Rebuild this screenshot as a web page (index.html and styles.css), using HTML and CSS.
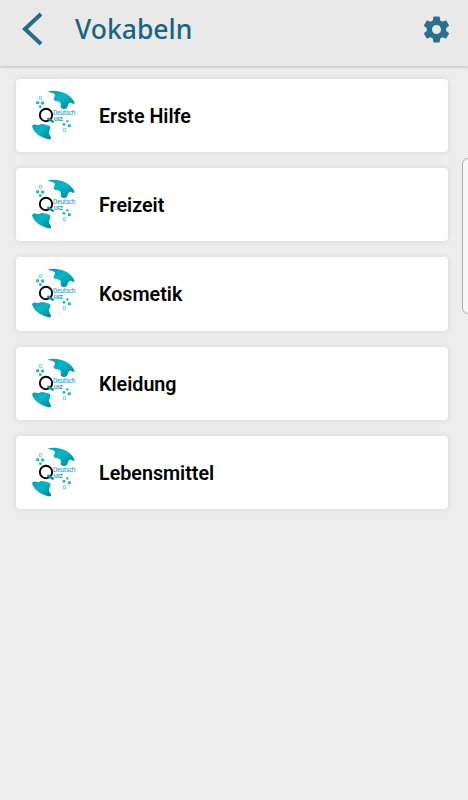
FILE: index.html
```html
<!DOCTYPE html>
<html lang="de">
  <head>
    <meta charset="UTF-8">
    <title>Vokabeln</title>
    <link rel="stylesheet" href="styles.css">
  </head>
  <body>
    <svg class="defs" width="0" height="0">
      <defs>
        <linearGradient id="sea" x1="0" y1="0" x2="1" y2="1">
          <stop offset="0" stop-color="#0a9cae"/>
          <stop offset="0.45" stop-color="#08b6c6"/>
          <stop offset="1" stop-color="#087f92"/>
        </linearGradient>
        <symbol id="logo" viewBox="0 0 180 180">
          <path fill="url(#sea)" d="M70 23C88 18 112 21 129 31C141 38 149 48 152 58C149 62 144 57 140 56C133 56 132 64 130 70C126 77 116 76 111 71C108 66 113 61 109 56C104 50 94 54 90 48C86 43 94 39 93 32C88 26 79 25 70 23Z"/>
          <path fill="url(#sea)" d="M24 127C27 119 35 121 41 123C46 124 49 119 55 120C65 122 76 123 79 128C81 134 75 139 75 146C75 154 82 156 81 164C77 169 67 164 59 161C42 155 29 143 24 127Z"/>
          <g fill="#18aebd">
            <circle cx="41" cy="56" r="5"/>
            <circle cx="56" cy="57" r="5"/>
            <circle cx="49" cy="68" r="4"/>
            <circle cx="130" cy="112" r="3.5"/>
            <circle cx="120" cy="121" r="4"/>
            <circle cx="136" cy="125" r="5"/>
          </g>
          <g fill="#d8f5f7">
            <circle cx="41" cy="56" r="1.3"/>
            <circle cx="57" cy="56" r="1.3"/>
            <circle cx="136" cy="125" r="1.3"/>
          </g>
          <g fill="none" stroke="#55bec9" stroke-width="2.2">
            <path d="M46 38h7v8h-7z"/>
            <path d="M118 134h7v9h-7z"/>
          </g>
          <circle cx="66" cy="93" r="18.5" fill="none" stroke="#050505" stroke-width="5.8"/>
          <path d="M70 103L89 115" stroke="#0a929e" stroke-width="7"/>
          <text x="87" y="93" class="logo-top" textLength="67" lengthAdjust="spacingAndGlyphs">Deutsch</text>
          <text x="89" y="110" class="logo-bottom" textLength="27" lengthAdjust="spacingAndGlyphs">UIZ</text>
        </symbol>
      </defs>
    </svg>

    <header class="topbar">
      <svg class="back" viewBox="0 0 22 34">
        <path d="M19 2L3 17L19 32"/>
      </svg>
      <h1>Vokabeln</h1>
      <svg class="gear" viewBox="0 0 24 24">
        <path d="M19.43 12.98c.04-.32.07-.64.07-.98s-.03-.66-.07-.98l2.11-1.65c.19-.15.24-.42.12-.64l-2-3.46c-.12-.22-.39-.3-.61-.22l-2.49 1c-.52-.4-1.08-.73-1.69-.98l-.38-2.65C14.46 2.18 14.25 2 14 2h-4c-.25 0-.46.18-.49.42l-.38 2.65c-.61.25-1.17.59-1.69.98l-2.49-1c-.23-.09-.49 0-.61.22l-2 3.46c-.13.22-.07.49.12.64l2.11 1.65c-.04.32-.07.65-.07.98s.03.66.07.98l-2.11 1.65c-.19.15-.24.42-.12.64l2 3.46c.12.22.39.3.61.22l2.49-1c.52.4 1.08.73 1.69.98l.38 2.65c.03.24.24.42.49.42h4c.25 0 .46-.18.49-.42l.38-2.65c.61-.25 1.17-.59 1.69-.98l2.49 1c.23.09.49 0 .61-.22l2-3.46c.12-.22.07-.49-.12-.64l-2.11-1.65zM12 15.5c-1.93 0-3.5-1.57-3.5-3.5s1.57-3.5 3.5-3.5 3.5 1.57 3.5 3.5-1.57 3.5-3.5 3.5z"/>
      </svg>
    </header>

    <main class="list">
      <div class="card"><svg class="logo"><use href="#logo"/></svg><span>Erste Hilfe</span></div>
      <div class="card"><svg class="logo"><use href="#logo"/></svg><span>Freizeit</span></div>
      <div class="card"><svg class="logo"><use href="#logo"/></svg><span>Kosmetik</span></div>
      <div class="card"><svg class="logo"><use href="#logo"/></svg><span>Kleidung</span></div>
      <div class="card"><svg class="logo"><use href="#logo"/></svg><span>Lebensmittel</span></div>
    </main>

    <div class="edge-handle"></div>
  </body>
</html>
```

FILE: styles.css
```css
html,body {
  width:100%;
  height:100%;
  margin:0;
  overflow:hidden;
}
body {
  position:relative;
  background:#ededed;
  font-family:Roboto, sans-serif;
}
.defs { position:absolute; }

.topbar {
  display:flex;
  align-items:center;
  box-sizing:border-box;
  height:66px;
  padding:0 18px 8px 22px;
  background:#e9e9e9;
  box-shadow:0 1px 3px rgba(0,0,0,0.2);
}
.topbar h1 {
  flex:1;
  margin:0 0 0 31px;
  color:#1b6480;
  font:500 26.5px/36px 'Noto Sans', sans-serif;
}
.back {
  width:22px;
  height:34px;
  fill:none;
  stroke:#256c88;
  stroke-width:4;
}
.gear {
  width:31px;
  height:31px;
  margin-right:-2px;
  fill:#2f6f8b;
}

.list {
  display:flex;
  flex-direction:column;
  gap:16px;
  padding:13px 20px 0 16px;
}
.card {
  display:flex;
  align-items:center;
  box-sizing:border-box;
  height:73.2px;
  padding-left:8px;
  background:#fff;
  border-radius:4px;
  box-shadow:0 0 5px rgba(90,90,120,0.16);
}
.card span {
  margin-left:15px;
  padding-top:2px;
  color:#000;
  font-size:19.7px;
  font-weight:600;
}
.logo {
  width:60px;
  height:60px;
  margin-bottom:3px;
}
.logo-top {
  fill:#2aa0dc;
  stroke:#2aa0dc;
  stroke-width:0.5;
  font:19px 'Open Sans', sans-serif;
}
.logo-bottom {
  fill:#0c97a4;
  font:700 17px 'Open Sans', sans-serif;
}

/* pull tab that sits over the right screen edge */
.edge-handle {
  position:absolute;
  top:158px;
  right:-8px;
  box-sizing:border-box;
  width:14px;
  height:156px;
  background:#f7f7f7;
  border:1px solid #aaa;
  border-radius:6px;
}
```
